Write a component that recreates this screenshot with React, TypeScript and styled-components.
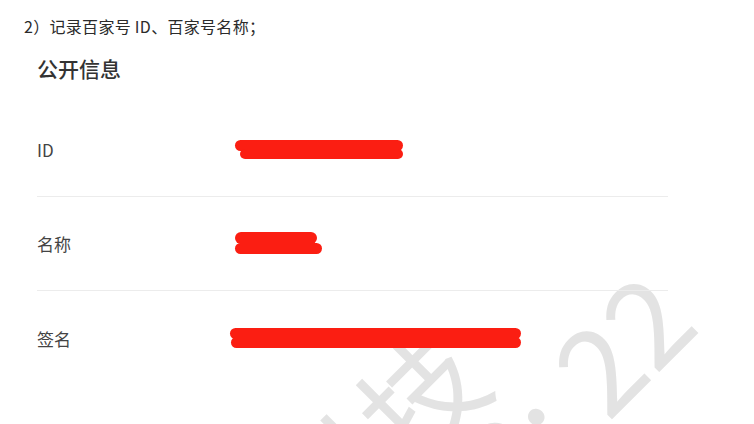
import React from 'react'
import styled, { createGlobalStyle } from 'styled-components'

const GlobalStyle = createGlobalStyle`
	html, body {
		margin: 0;
		padding: 0;
		background: #ffffff;
	}
	body {
		font-family: 'Noto Sans CJK SC', 'Noto Sans', 'Liberation Sans', sans-serif;
		color: #333333;
	}
`

type Stroke = { x: number; y: number; w: number; h: number }

const Page = styled.div`
	position: relative;
	width: 754px;
	height: 424px;
	overflow: hidden;
	background: #ffffff;
`

const Intro = styled.div`
	position: relative;
	z-index: 1;
	padding: 15px 0 0 24px;
	height: 22px;
	font-size: 16px;
	line-height: 22px;
	letter-spacing: 0.3px;
	color: #2b2b2b;
`

const InfoCard = styled.section`
	position: relative;
	z-index: 1;
	width: 631px;
	margin: 18px 0 0 37px;
`

const CardTitle = styled.h2`
	margin: 0;
	height: 48px;
	font-size: 21px;
	font-weight: 500;
	line-height: 26px;
	color: #333333;
`

const InfoRow = styled.div<{ $last?: boolean }>`
	display: grid;
	grid-template-columns: 193px 1fr;
	align-items: center;
	height: 94px;
	border-bottom: ${({ $last }) => ($last ? 'none' : '1px solid #ececec')};
	box-sizing: border-box;
`

const RowLabel = styled.span`
	font-size: 17px;
	color: #444444;
`

const RowValue = styled.div<{ $indent: number }>`
	display: flex;
	height: 30px;
	padding-left: ${({ $indent }) => $indent}px;
`

const Scribble = styled.svg`
	display: block;
	overflow: visible;
`

const Watermark = styled.span<{ $right: number; $top: number }>`
	position: absolute;
	right: ${({ $right }) => $right}px;
	top: ${({ $top }) => $top}px;
	font-size: 120px;
	font-weight: 400;
	line-height: 120px;
	height: 120px;
	white-space: nowrap;
	color: #e3e3e3;
	transform: rotate(-45deg);
	transform-origin: right center;
	pointer-events: none;
	font-family: 'Noto Sans CJK SC', 'Noto Sans', sans-serif;
`

const Colon = styled.span`
	margin-right: 30px;
`

const Redaction = ({ strokes }: { strokes: Stroke[] }) => (
	<Scribble width="300" height="30">
		{strokes.map((s, i) => (
			<rect key={i} x={s.x} y={s.y} width={s.w} height={s.h} rx={s.h / 2} fill="#fb1e12" />
		))}
	</Scribble>
)

const rows = [
	{
		label: 'ID',
		indent: 5,
		strokes: [
			{ x: 0, y: 5, w: 168, h: 11 },
			{ x: 5, y: 14, w: 163, h: 10 },
		],
	},
	{
		label: '名称',
		indent: 5,
		strokes: [
			{ x: 0, y: 3, w: 82, h: 12 },
			{ x: 0, y: 14, w: 87, h: 11 },
		],
	},
	{
		label: '签名',
		indent: 0,
		strokes: [
			{ x: 0, y: 5, w: 291, h: 11 },
			{ x: 1, y: 14, w: 290, h: 11 },
		],
	},
]

export default function App() {
	return (
		<Page>
			<GlobalStyle />
			<Watermark $right={294} $top={290}>科技</Watermark>
			<Watermark $right={88} $top={232}>
				10<Colon>:</Colon>22
			</Watermark>
			<Intro>2）记录百家号 ID、百家号名称；</Intro>
			<InfoCard>
				<CardTitle>公开信息</CardTitle>
				{rows.map((row, i) => (
					<InfoRow key={row.label} $last={i === rows.length - 1}>
						<RowLabel>{row.label}</RowLabel>
						<RowValue $indent={row.indent}>
							<Redaction strokes={row.strokes} />
						</RowValue>
					</InfoRow>
				))}
			</InfoCard>
		</Page>
	)
}
